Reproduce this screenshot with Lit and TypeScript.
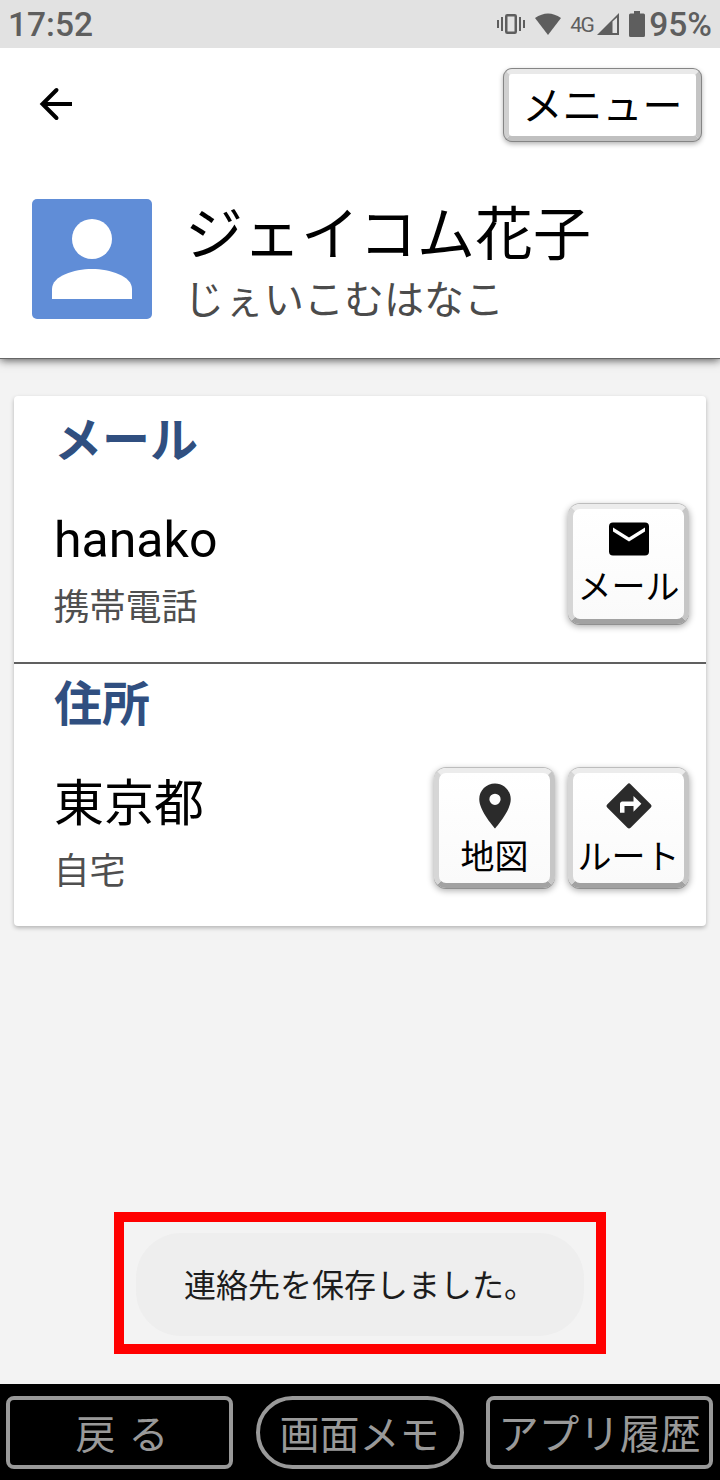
import { LitElement, html, css, svg } from "lit";
import { customElement, property } from "lit/decorators.js";

const mailIcon = svg`<path fill="#000" fill-rule="evenodd" d="M4 3.800h16a2 2 0 0 1 2 2v12.400a2 2 0 0 1-2 2H4a2 2 0 0 1-2-2V5.800a2 2 0 0 1 2-2zM20 6.200l-8 5-8-5v2l8 5 8-5z"/>`;
const pinIcon = svg`<path fill="#2b2b2b" d="M12 2C8.13 2 5 5.13 5 9c0 5.25 7 13 7 13s7-7.750 7-13c0-3.870-3.130-7-7-7zm0 9.500a2.500 2.500 0 1 1 0-5 2.500 2.500 0 0 1 0 5z"/>`;
const routeIcon = svg`<path fill="#2b2b2b" d="M21.710 11.290l-9-9a1 1 0 0 0-1.410 0l-9 9a1 1 0 0 0 0 1.410l9 9a1 1 0 0 0 1.410 0l9-9a1 1 0 0 0 0-1.410zM14 14.500V12h-4v3H8v-4c0-.550.450-1 1-1h5V7.500l3.500 3.500-3.500 3.500z"/>`;

@customElement("bevel-button")
class BevelButton extends LitElement {
  @property() label = "";
  @property() kind = "";
  static styles = css`
    :host { display: block; }
    .face {
      box-sizing: border-box; width: 121px; height: 120px;
      display: flex; flex-direction: column; align-items: center;
      border: 5px solid; border-color: #ececec #c6c6c6 #a2a2a2 #d6d6d6;
      border-radius: 12px;
      background: linear-gradient(#fff, #fafafa) padding-box;
      box-shadow: 0 -1px 0 0 #bdbdbd, 0 1px 0 0 #909090, 0 2px 6px 1px rgba(0,0,0,.3);
      font: 34px/44px "Noto Sans CJK JP", sans-serif; color: #000; white-space: nowrap;
    }
    svg { display: block; width: 54px; height: 54px; margin-top: 6px; }
    .mail svg { width: 48px; height: 48px; margin-top: 5.500px; }
    .text { margin-top: 0; }
    .menu { width: 197px; height: 72px; font-size: 40px; line-height: 59px; border-radius: 8px;
      border-color: #e9e9e9 #c4c4c4 #c0c0c0 #d0d0d0; background: #fff padding-box;
      box-shadow: 0 0 0 1px #858585, 0 2px 5px 1px rgba(0,0,0,.3); }
  `;
  render() {
    const icon = this.kind === "mail" ? mailIcon : this.kind === "map" ? pinIcon : routeIcon;
    return html`<div class="face ${this.kind}">
      ${this.kind === "menu" ? "" : html`<svg viewBox="0 0 24 24">${icon}</svg>`}
      <span class="text">${this.label}</span>
    </div>`;
  }
}

@customElement("app-root")
class AppRoot extends LitElement {
  static styles = css`
    :host {
      display: flex; flex-direction: column; width: 720px; height: 1480px; overflow: hidden;
      background: #f3f3f3; color: #000; font-family: "Noto Sans CJK JP", sans-serif; white-space: nowrap;
    }
    svg { display: block; flex: none; }
    .status {
      box-sizing: border-box; height: 48px; flex: none; background: #e2e2e2; color: #5e5e5e;
      display: flex; align-items: center; justify-content: space-between; padding: 2px 8px 0 8px;
      font: 500 33.500px/46px Roboto, sans-serif;
    }
    .tray { display: flex; align-items: center; }
    .net { font: 400 21px/46px Roboto, sans-serif; width: 22px; display: block; margin: 0 5px 0 9px; letter-spacing: -1.500px; }
    .tray svg { margin-top: -2px; }
    .vibrate { margin-right: 10px; }
    .tray .battery { margin: -2px 4px 0 10px; }
    .header {
      box-sizing: border-box; height: 311px; flex: none; background: #fff; border-bottom: 1px solid #666;
      box-shadow: 0 1px 9px rgba(0,0,0,.7); clip-path: inset(0 0 -20px 0);
    }
    .bar { display: flex; justify-content: space-between; padding: 21px 19px 0 32px; height: 130px; }
    .back { margin-top: 11px; }
    .person { display: flex; gap: 33px; padding-left: 32px; }
    .names { height: 120px; }
    .name { font-size: 58px; line-height: 64px; margin-top: -1px; }
    .kana { font-size: 40px; line-height: 56px; margin-top: 7px; margin-left: -1px; color: #4b4b4b; }
    .card {
      box-sizing: border-box; margin: 37px 14px 0; padding-top: 4px; height: 530px; flex: none;
      background: #fff; border-radius: 4px; box-shadow: 0 2px 4px rgba(0,0,0,.26);
    }
    .section { height: 262px; }
    .section + .section { border-top: 2px solid #606060; }
    .title { font-size: 48px; line-height: 73px; font-weight: 700; color: #304f80; padding-left: 40px; height: 73px; }
    .row { display: flex; justify-content: space-between; padding: 30px 17px 0 40px; }
    .value { font-size: 50px; line-height: 64px; }
    .latin { font-family: Roboto, sans-serif; line-height: 1; }
    .kind { font-size: 36px; line-height: 44px; margin-top: 15px; margin-left: -0.500px; color: #4f4f4f; }
    .actions { display: flex; gap: 13px; padding-top: 1px; }
    .frame {
      box-sizing: border-box; margin: auto auto 30px; width: 492px; height: 142px; flex: none;
      border: 10px solid #f00; display: flex; justify-content: center; padding-top: 11px;
    }
    .toast {
      box-sizing: border-box; width: 448px; height: 103px; border-radius: 45px; background: #eee; color: #1c1c1c;
      padding-left: 48px; font-size: 32px; line-height: 101px;
    }
    .nav {
      box-sizing: border-box; height: 96px; flex: none; background: #000; padding: 12px 7px 0 6px;
      display: flex; justify-content: space-between; color: #999;
    }
    .key {
      box-sizing: border-box; width: 227px; height: 73px; border: 4px solid #999; border-radius: 8px;
      font-size: 40px; line-height: 64px; display: flex; justify-content: center;
    }
    .memo { width: 208px; border-radius: 37px; }
    .gap { word-spacing: 4px; padding-left: 5px; }
    .wide { font-size: 40.500px; }
  `;

  render() {
    return html`
      <div class="status">
        <span>17:52</span>
        <div class="tray">
          <svg class="vibrate" width="28" height="22" viewBox="0 0 28 22" fill="none" stroke="#5e5e5e">
            <path stroke-width="2" d="M1 7v8M5 4v14M23 4v14M27 7v8"/>
            <rect x="9.250" y="2.250" width="9.500" height="17.500" rx="1" stroke-width="2.500"/>
          </svg>
          <svg width="26" height="22" viewBox="0 0 26 22" fill="#5e5e5e">
            <path d="M0 5Q13-4 26 5L13 22z"/>
          </svg>
          <span class="net">4G</span>
          <svg width="22" height="22" viewBox="0 0 22 22" fill="#5e5e5e">
            <path fill-rule="evenodd" d="M22 0v22H0zM15.500 8.500v11.500h4.500V4.500z"/>
          </svg>
          <svg class="battery" width="16" height="26" viewBox="0 0 16 26" fill="#5e5e5e">
            <path d="M5 0h6v2.500h3.500A1.500 1.500 0 0 1 16 4v20.500a1.500 1.500 0 0 1-1.500 1.500h-13A1.500 1.500 0 0 1 0 24.500V4a1.500 1.500 0 0 1 1.500-1.500H5z"/>
          </svg>
          <span>95%</span>
        </div>
      </div>
      <div class="header">
        <div class="bar">
          <svg class="back" width="48" height="48" viewBox="0 0 48 48" fill="none" stroke="#000" stroke-width="4">
            <path d="M10 24h30"/><path stroke-linecap="round" d="M24.500 10L10.500 24l14 14"/>
          </svg>
          <bevel-button kind="menu" label="メニュー"></bevel-button>
        </div>
        <div class="person">
          <svg width="120" height="120" viewBox="0 0 120 120">
            <rect width="120" height="120" rx="5" fill="#608dd7"/>
            <circle cx="60" cy="40" r="20" fill="#fff"/>
            <path fill="#fff" d="M20 100V90C20 77 42 70 60 70s40 7 40 20v10z"/>
          </svg>
          <div class="names">
            <div class="name">ジェイコム花子</div>
            <div class="kana">じぇいこむはなこ</div>
          </div>
        </div>
      </div>
      <div class="card">
        <div class="section">
          <div class="title">メール</div>
          <div class="row">
            <div><div class="value"><span class="latin">hanako</span></div><div class="kind">携帯電話</div></div>
            <div class="actions"><bevel-button kind="mail" label="メール"></bevel-button></div>
          </div>
        </div>
        <div class="section">
          <div class="title">住所</div>
          <div class="row">
            <div><div class="value">東京都</div><div class="kind">自宅</div></div>
            <div class="actions">
              <bevel-button kind="map" label="地図"></bevel-button>
              <bevel-button kind="route" label="ルート"></bevel-button>
            </div>
          </div>
        </div>
      </div>
      <div class="frame"><div class="toast">連絡先を保存しました。</div></div>
      <div class="nav">
        <div class="key gap">戻 る</div>
        <div class="key memo">画面メモ</div>
        <div class="key wide">アプリ履歴</div>
      </div>
    `;
  }
}
